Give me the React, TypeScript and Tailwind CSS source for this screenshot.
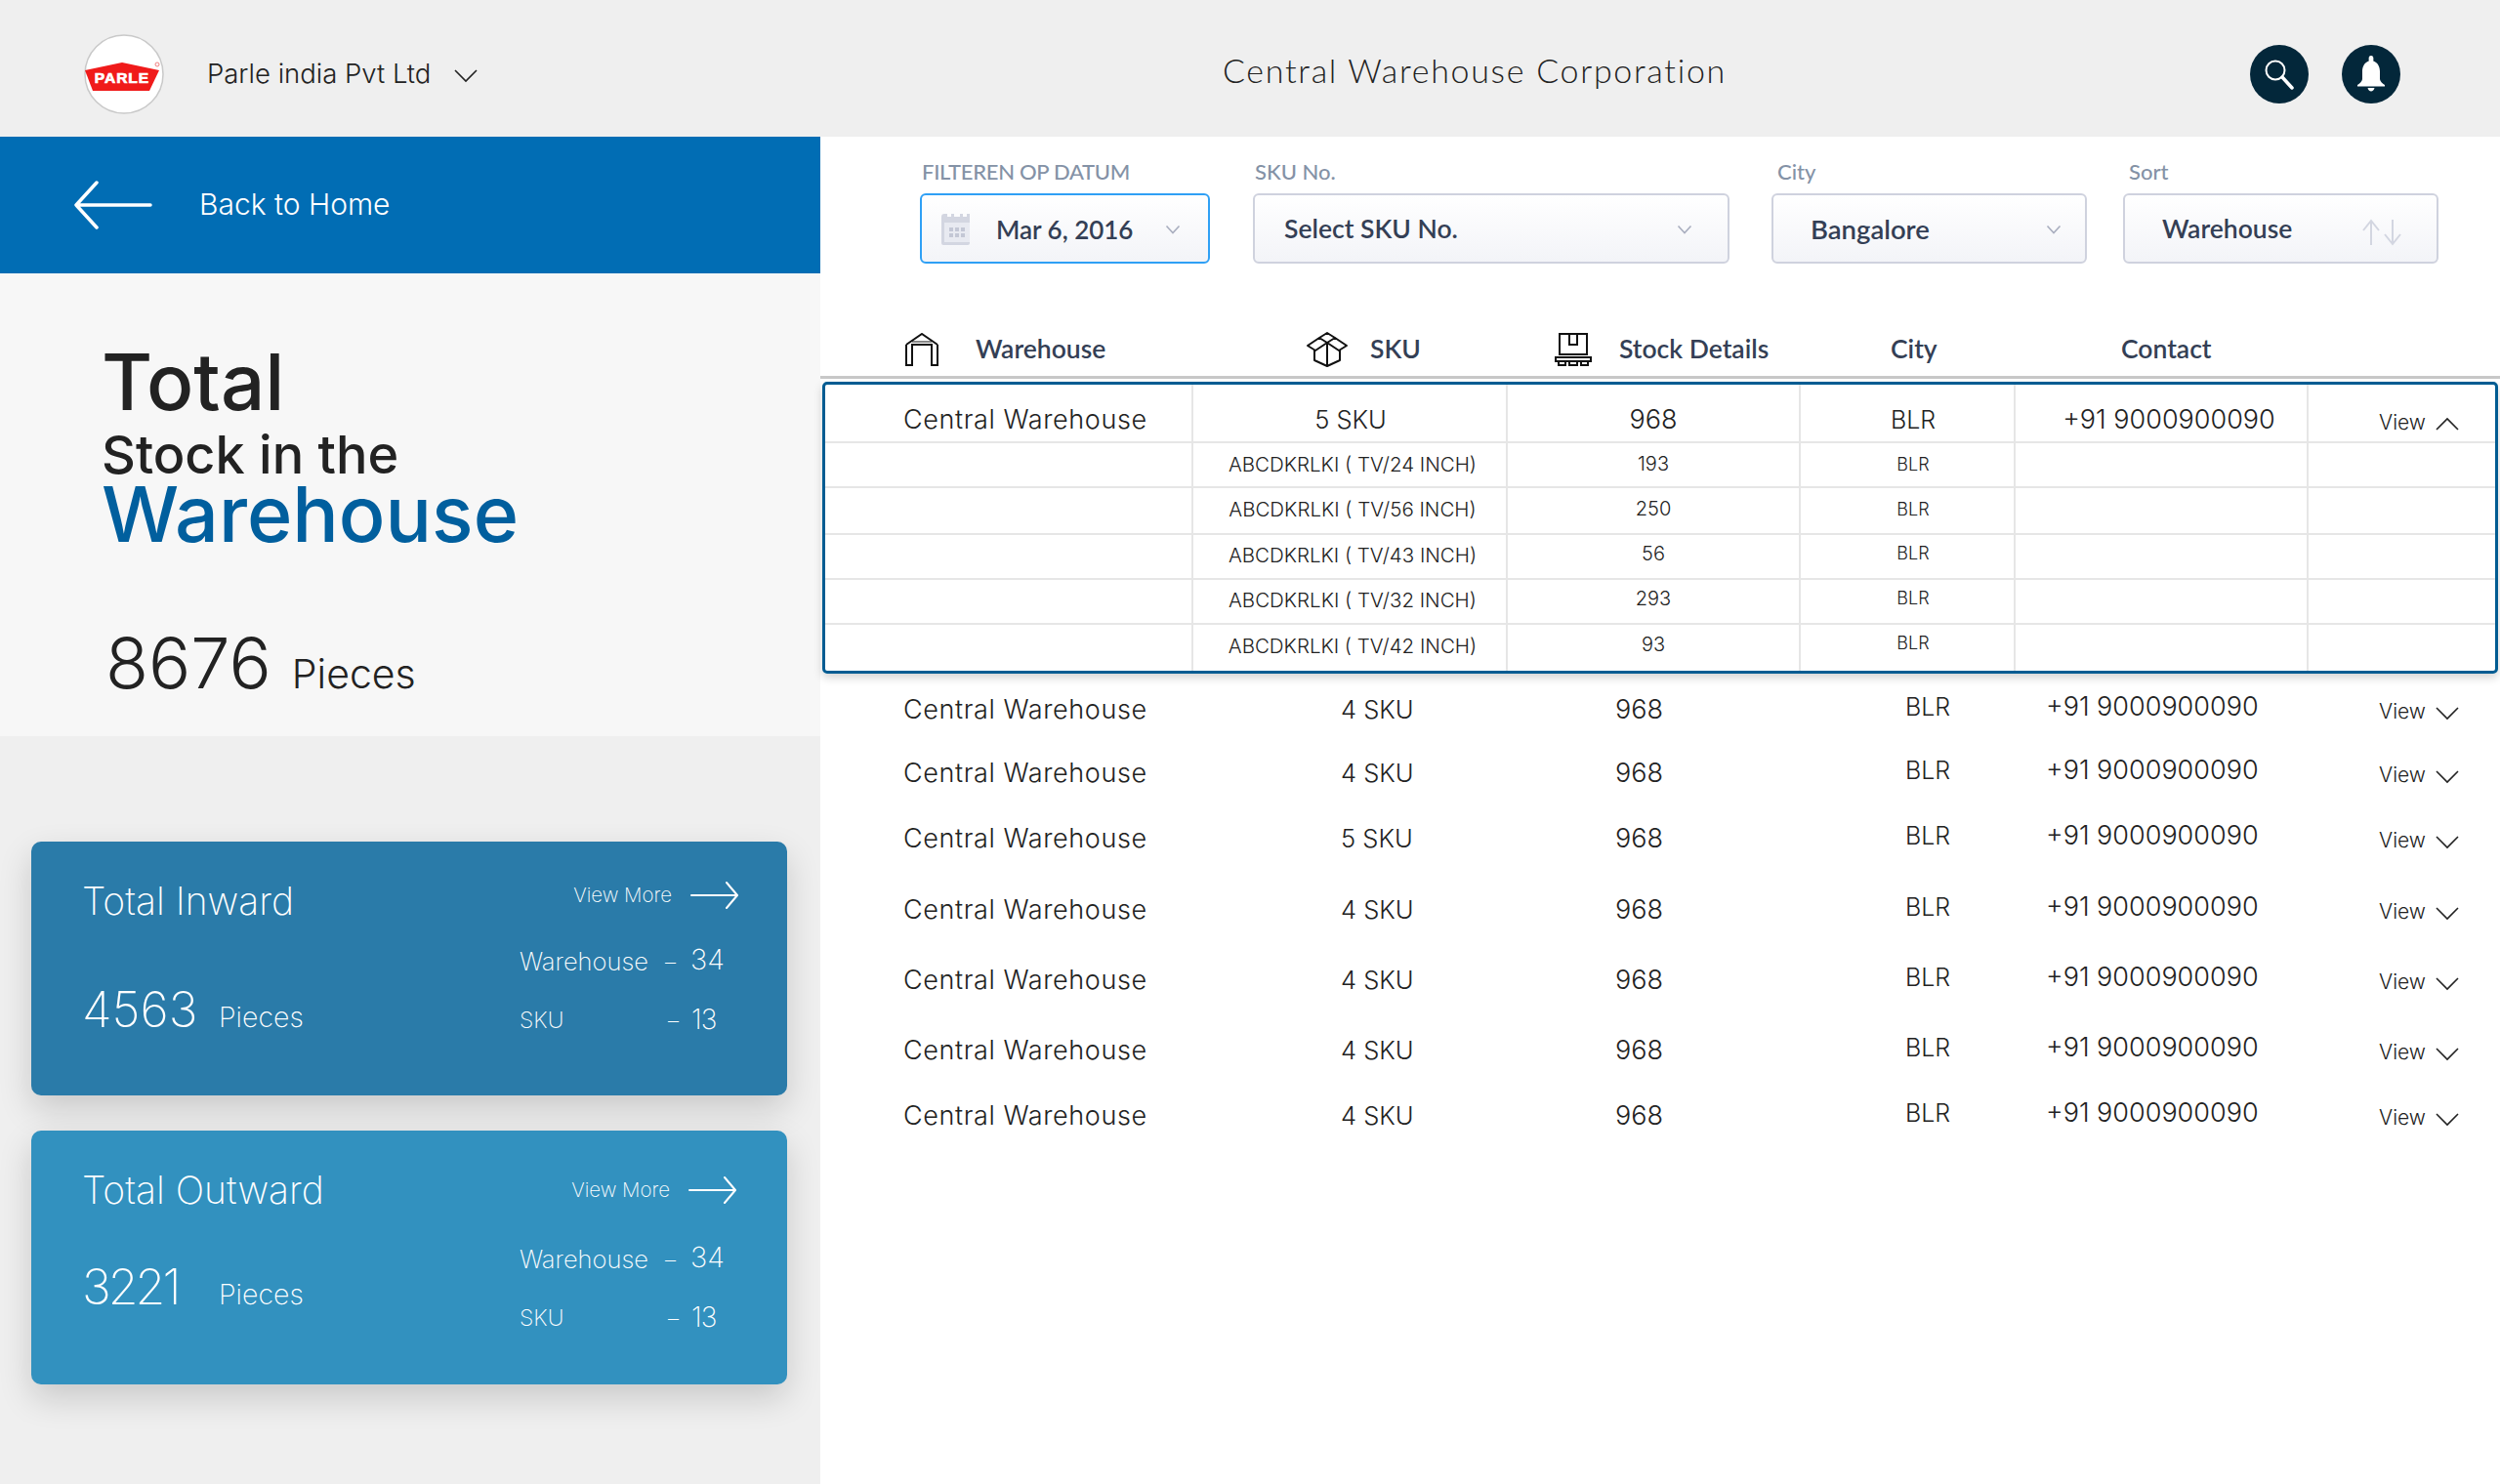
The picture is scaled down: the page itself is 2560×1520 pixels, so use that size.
const poppins = "font-['Inter',sans-serif]";
const source = "font-['Lato',sans-serif]";

type RowType = {
	sku: string;
	gap: string;
};

const rows: RowType[] = [
	{ sku: '4 SKU', gap: 'mt-[7px]' },
	{ sku: '4 SKU', gap: 'mt-[5px]' },
	{ sku: '5 SKU', gap: 'mt-[7px]' },
	{ sku: '4 SKU', gap: 'mt-[13px]' },
	{ sku: '4 SKU', gap: 'mt-[12px]' },
	{ sku: '4 SKU', gap: 'mt-[12px]' },
	{ sku: '4 SKU', gap: 'mt-[7px]' },
];

const subRows = [
	{ name: 'ABCDKRLKI ( TV/24 INCH)', qty: '193', h: 'h-[46px]', namePad: 'pb-0', qtyPad: 'pb-[2px]', cityPad: 'pb-[2px]' },
	{ name: 'ABCDKRLKI ( TV/56 INCH)', qty: '250', h: 'h-[48px]', namePad: 'pb-[2px]', qtyPad: 'pb-[4px]', cityPad: 'pb-[4px]' },
	{ name: 'ABCDKRLKI ( TV/43 INCH)', qty: '56', h: 'h-[46px]', namePad: 'pb-[2px]', qtyPad: 'pb-[7px]', cityPad: 'pb-[7px]' },
	{ name: 'ABCDKRLKI ( TV/32 INCH)', qty: '293', h: 'h-[46px]', namePad: 'pb-[2px]', qtyPad: 'pb-[7px]', cityPad: 'pb-[7px]' },
	{ name: 'ABCDKRLKI ( TV/42 INCH)', qty: '93', h: 'h-[47px]', namePad: 'pb-[2px]', qtyPad: 'pb-[7px]', cityPad: 'pb-[11px]' },
];

function ParleLogo() {
	return (
		<svg width="82" height="82" viewBox="0 0 82 82" className="shrink-0">
			<circle cx="41" cy="41" r="40" fill="#fff" stroke="#c9c9c9" strokeWidth="1.5" />
			<polygon points="1,37 39,29 77,37 67,58 9,58" fill="#f01a1a" />
			<circle cx="75" cy="31" r="2" fill="none" stroke="#f08080" strokeWidth="1" />
			<text x="39" y="50" textAnchor="middle" fill="#fff" fontFamily="Liberation Sans" fontWeight="700" fontSize="15.5" stroke="#fff" strokeWidth="0.7" letterSpacing="1">
				PARLE
			</text>
		</svg>
	);
}

function LongArrow({ className }: { className?: string }) {
	return (
		<svg width="50" height="28" viewBox="0 0 50 28" fill="none" stroke="#fff" strokeWidth="2" strokeLinecap="round" strokeLinejoin="round" className={className}>
			<path d="M1 14h47M37 1l11 13-11 13" />
		</svg>
	);
}

function Chevron({ up, className }: { up?: boolean; className?: string }) {
	return (
		<svg width="24" height="14" viewBox="0 0 24 14" fill="none" stroke="#222" strokeWidth="1.6" className={className}>
			<path d={up ? 'M1 13 12 2l11 11' : 'M1 1l11 11L23 1'} />
		</svg>
	);
}

function SmallChevron({ className }: { className?: string }) {
	return (
		<svg width="16" height="10" viewBox="0 0 16 10" fill="none" stroke="#a9aebf" strokeWidth="1.6" className={className}>
			<path d="M1.500 1.500 8 8.500l6.500-7" />
		</svg>
	);
}

function WarehouseIcon() {
	return (
		<svg width="36" height="34" viewBox="0 0 36 34" fill="none" stroke="#111" strokeWidth="2">
			<path d="M2 12 18 1l16 11M2 12v21h6V12h20v21h6V12" />
			<path d="M8 9h20" strokeWidth="1" />
		</svg>
	);
}

function BoxIcon() {
	return (
		<svg width="42" height="36" viewBox="0 0 42 36" fill="none" stroke="#111" strokeWidth="2" strokeLinejoin="round">
			<path d="M21 1l8 5-8 5-8-5zM13 6 1 14l8 5 12-8 12 8 8-5-12-8" />
			<path d="M21 11v24M8 19v10l13 6 13-6V19" />
		</svg>
	);
}

function PalletIcon() {
	return (
		<svg width="38" height="34" viewBox="0 0 38 34" fill="none" stroke="#111" strokeWidth="2">
			<rect x="5" y="1" width="28" height="21" />
			<path d="M15 1v11h8V1" />
			<path d="M1 25h36v4H1zM4 29v4h7v-4M15 29v4h8v-4M27 29v4h7v-4" />
		</svg>
	);
}

function CalendarIcon() {
	return (
		<svg width="32" height="32" viewBox="0 0 32 32">
			<path d="M3 0h3v3h4V0h3v3h6V0h3v3h4V0h3a2 2 0 0 1 0 0v30a2 2 0 0 1-2 2H2a2 2 0 0 1-2-2V3a3 3 0 0 1 3-3z" fill="#d3d6e1" />
			<rect x="3" y="9" width="26" height="20" fill="#e8eaf1" />
			<g fill="#c3c7d5">
				<rect x="8" y="14" width="4" height="4" />
				<rect x="14" y="14" width="4" height="4" />
				<rect x="20" y="14" width="4" height="4" />
				<rect x="8" y="20" width="4" height="4" />
				<rect x="14" y="20" width="4" height="4" />
				<rect x="20" y="20" width="4" height="4" />
			</g>
		</svg>
	);
}

function Filter(props: { label: string; width: string; children: React.ReactNode; active?: boolean; labelClass?: string; className?: string }) {
	return (
		<div className={`${props.width} ${props.className ?? ''}`}>
			<p className={`h-[28px] text-[22px] leading-[28px] font-medium text-[#8492a6] ${props.labelClass ?? 'pl-[2px]'}`}>{props.label}</p>
			<div
				className={`mt-[8px] flex h-[72px] items-center rounded-[6px] border-2 bg-gradient-to-b from-white to-[#f3f4f8] pt-[2px] text-[26.5px] font-semibold text-[#343f55] ${
					props.active ? 'border-[#2fa0f5]' : 'border-[#cfd2de]'
				}`}
			>
				{props.children}
			</div>
		</div>
	);
}

function StatCard(props: {
	title: string;
	count: string;
	countClass?: string;
	color: string;
	body: string;
	left: string;
	arrowShift: string;
}) {
	return (
		<div className={`h-[260px] w-[774px] rounded-[10px] pt-[39px] pl-[52px] text-white shadow-[0_14px_34px_rgba(0,0,0,0.16)] ${props.color} ${poppins}`}>
			<div className="flex h-[44px] items-center justify-between pr-[49px]">
				<h3 className="text-[39px] leading-[44px] font-extralight">{props.title}</h3>
				<div className={`flex items-center gap-[19px] ${props.arrowShift}`}>
					<span className="text-[20.5px] font-extralight">View More</span>
					<LongArrow />
				</div>
			</div>
			<div className={`flex h-[100px] items-end ${props.body}`}>
				<div className={`flex w-[448px] items-baseline ${props.left}`}>
					<span className={`w-[140px] text-[50px] leading-[56px] font-extralight ${props.countClass ?? ''}`}>{props.count}</span>
					<span className="text-[28.5px] font-extralight">Pieces</span>
				</div>
				<div className="flex h-full flex-col justify-between text-[25.5px] font-extralight">
					<div className="flex h-[40px] items-center">
						<span className="w-[149px]">Warehouse</span>
						<span className="w-[26px] text-[22px]">–</span>
						<span className="-mt-[4px] text-[29px]">34</span>
					</div>
					<div className="flex h-[40px] items-center">
						<span className="w-[152px] text-[23px]">SKU</span>
						<span className="w-[24px] text-[22px]">–</span>
						<span className="-mt-[2px] text-[28px] tracking-[-1px]">13</span>
					</div>
				</div>
			</div>
		</div>
	);
}

function Sidebar() {
	return (
		<aside className={`w-[840px] shrink-0 bg-[#efefef] pb-[102px] ${poppins}`}>
			<div className="flex h-[140px] items-center bg-[#016db4] pl-[76px] text-white">
				<svg width="80" height="50" viewBox="0 0 80 50" fill="none" stroke="#fff" strokeWidth="3.5" strokeLinecap="round" strokeLinejoin="round">
					<path d="M2 25h76M23 2 2 25l21 23" />
				</svg>
				<span className="ml-[48px] -mt-[2px] text-[30px] font-light">Back to Home</span>
			</div>
			<div className="h-[474px] bg-[#f7f7f7] pt-[69px] pl-[104px] text-[#222]">
				<h1 className="text-[80px] leading-[84px] font-medium">Total</h1>
				<p className="mt-[7px] text-[54px] leading-[52px] font-medium">Stock in the</p>
				<p className="text-[79px] leading-[68px] font-medium text-[#015f9e]">Warehouse</p>
				<div className="mt-[79px] flex items-baseline pl-[4px]">
					<span className="text-[72px] leading-[80px] font-light">8676</span>
					<span className="ml-[21px] text-[41px] font-light">Pieces</span>
				</div>
			</div>
			<div className="mt-[108px] flex flex-col gap-[36px] pl-[32px]">
				<StatCard title="Total Inward" count="4563" color="bg-[#2a7ba9]" body="mt-[20px]" left="pb-[1px]" arrowShift="-mt-[12px]" />
				<StatCard title="Total Outward" count="3221" countClass="tracking-[-3px]" color="bg-[#3291bf]" body="mt-[29px]" left="pb-[22px]" arrowShift="mr-[2px]" />
			</div>
		</aside>
	);
}

function ExpandedRow() {
	return (
		<div className={`mx-[2px] mt-[3px] h-[299px] rounded-[5px] border-[3px] border-[#015c92] text-[#222] shadow-[0_4px_10px_rgba(0,0,0,0.18)] ${poppins}`}>
			<div className="grid h-[60px] grid-cols-[377px_322px_300px_220px_300px_1fr] border-b-2 border-[#e6e6e6] text-[27px] font-light">
				<div className="flex items-center border-r-2 border-[#e6e6e6] pt-[14px] pl-[80px] tracking-[0.6px]">Central Warehouse</div>
				<div className="flex items-center justify-center border-r-2 border-[#e6e6e6] pt-[14px] pl-[2px] text-[25.5px]">5 SKU</div>
				<div className="flex items-center justify-center border-r-2 border-[#e6e6e6] pt-[15px]">968</div>
				<div className="flex items-center justify-center border-r-2 border-[#e6e6e6] pt-[15px] pl-[12px] text-[25px]">BLR</div>
				<div className="flex items-center justify-center border-r-2 border-[#e6e6e6] pt-[14px] pl-[16px]">+91 9000900090</div>
				<div className="flex items-center pt-[20px] pl-[72px] text-[21px] font-light">
					View
					<Chevron up className="ml-[10px] mt-[2px]" />
				</div>
			</div>
			{subRows.map((row, i) => (
				<div
					key={row.name}
					className={`grid grid-cols-[377px_322px_300px_220px_300px_1fr] text-[20px] font-light ${row.h} ${
						i < subRows.length - 1 ? 'border-b-2 border-[#e6e6e6]' : ''
					}`}
				>
					<div className="border-r-2 border-[#e6e6e6]" />
					<div className={`flex items-center justify-center border-r-2 border-[#e6e6e6] pl-[6px] text-[20.5px] whitespace-nowrap ${row.namePad}`}>{row.name}</div>
					<div className={`flex items-center justify-center border-r-2 border-[#e6e6e6] ${row.qtyPad}`}>{row.qty}</div>
					<div className={`flex items-center justify-center border-r-2 border-[#e6e6e6] pl-[12px] text-[18px] ${row.cityPad}`}>BLR</div>
					<div className="border-r-2 border-[#e6e6e6]" />
					<div />
				</div>
			))}
		</div>
	);
}

function Main() {
	return (
		<main className="min-w-0 flex-1 bg-white pt-[22px]">
			<div className={`flex pl-[102px] ${source}`}>
				<Filter label="FILTEREN OP DATUM" width="w-[297px]" active labelClass="pl-[2px] tracking-[-0.3px]">
					<span className="ml-[20px]"><CalendarIcon /></span>
					<span className="ml-[24px] text-[26px]">Mar 6, 2016</span>
					<SmallChevron className="ml-auto mr-[28px]" />
				</Filter>
				<Filter label="SKU No." width="w-[488px]" className="ml-[44px]">
					<span className="ml-[30px]">Select SKU No.</span>
					<SmallChevron className="ml-auto mr-[36px]" />
				</Filter>
				<Filter label="City" width="w-[323px]" className="ml-[43px]" labelClass="pl-[6px]">
					<span className="ml-[38px] text-[27.500px]">Bangalore</span>
					<SmallChevron className="ml-auto mr-[24px]" />
				</Filter>
				<Filter label="Sort" width="w-[323px]" className="ml-[37px]" labelClass="pl-[6px]">
					<span className="ml-[38px]">Warehouse</span>
					<svg width="42" height="28" viewBox="0 0 42 28" fill="none" stroke="#d3d6e1" strokeWidth="2" className="ml-auto mr-[35px] mt-[6px]">
						<path d="M10 27V2M2 12l8-10 8 10M32 1v25M24 16l8 10 8-10" />
					</svg>
				</Filter>
			</div>

			<div className={`mt-[62px] flex h-[56px] items-center border-b-[3px] border-[#c8c8c8] pb-[2px] text-[26.5px] font-semibold text-[#343f55] ${source}`}>
				<div className="flex w-[498px] items-center pl-[86px]">
					<WarehouseIcon />
					<span className="ml-[37px]">Warehouse</span>
				</div>
				<div className="flex w-[254px] items-center">
					<BoxIcon />
					<span className="ml-[23px]">SKU</span>
				</div>
				<div className="flex w-[344px] items-center">
					<PalletIcon />
					<span className="ml-[28px]">Stock Details</span>
				</div>
				<span className="w-[236px]">City</span>
				<span>Contact</span>
			</div>

			<ExpandedRow />

			<div className={`pl-[85px] text-[27px] font-light text-[#222] ${poppins}`}>
				{rows.map((row, i) => (
					<div key={i} className={`grid h-[60px] grid-cols-[448px_281px_297px_144px_341px_1fr] items-center ${row.gap}`}>
						<span className="tracking-[0.6px]">Central Warehouse</span>
						<span className="text-[25.5px]">{row.sku}</span>
						<span>968</span>
						<span className="-mt-[5px] text-[25px]">BLR</span>
						<span className="-mt-[5px]">+91 9000900090</span>
						<span className="mt-[4px] flex items-center text-[21px]">
							View
							<Chevron className="ml-[10px] mt-[4px]" />
						</span>
					</div>
				))}
			</div>
		</main>
	);
}

export default function App() {
	return (
		<div className="flex min-h-[1520px] w-[2560px] flex-col overflow-hidden">
			<header className="flex h-[140px] items-center bg-[#efefef] pt-[11px] pb-0 text-[#222]">
				<div className={`flex w-[1252px] items-center pl-[86px] ${poppins}`}>
					<ParleLogo />
					<span className="ml-[44px] text-[27.500px] font-light">Parle india Pvt Ltd</span>
					<Chevron className="ml-[24px] mt-[4px]" />
				</div>
				<span className={`-mt-[8px] text-[34px] font-light tracking-[1.7px] ${source}`}>Central Warehouse Corporation</span>
				<div className="ml-auto flex gap-[34px] pr-[102px]">
					<button className="flex h-[60px] w-[60px] items-center justify-center rounded-full bg-[#03273a]">
						<svg width="32" height="32" viewBox="0 0 32 32" fill="none" stroke="#fff">
							<circle cx="12" cy="12" r="9.500" strokeWidth="2" />
							<path d="M19 19l10 11" strokeWidth="3.500" strokeLinecap="round" />
						</svg>
					</button>
					<button className="flex h-[60px] w-[60px] items-center justify-center rounded-full bg-[#03273a]">
						<svg width="30" height="38" viewBox="0 0 30 38" fill="#fff">
							<path d="M15 0c1.600 0 2.400 1.200 2.400 3l-.1 2.400C22 7 24 11.500 24 16v8c0 2 2.500 4.500 5 6v1.500H1V30c2.500-1.500 5-4 5-6v-8c0-4.500 2-9 6.700-10.600L12.600 3C12.600 1.200 13.400 0 15 0z" />
							<path d="M11.500 33h7c-.5 2-1.800 3.500-3.500 3.500S12 35 11.500 33z" />
						</svg>
					</button>
				</div>
			</header>
			<div className="flex flex-1">
				<Sidebar />
				<Main />
			</div>
		</div>
	);
}
